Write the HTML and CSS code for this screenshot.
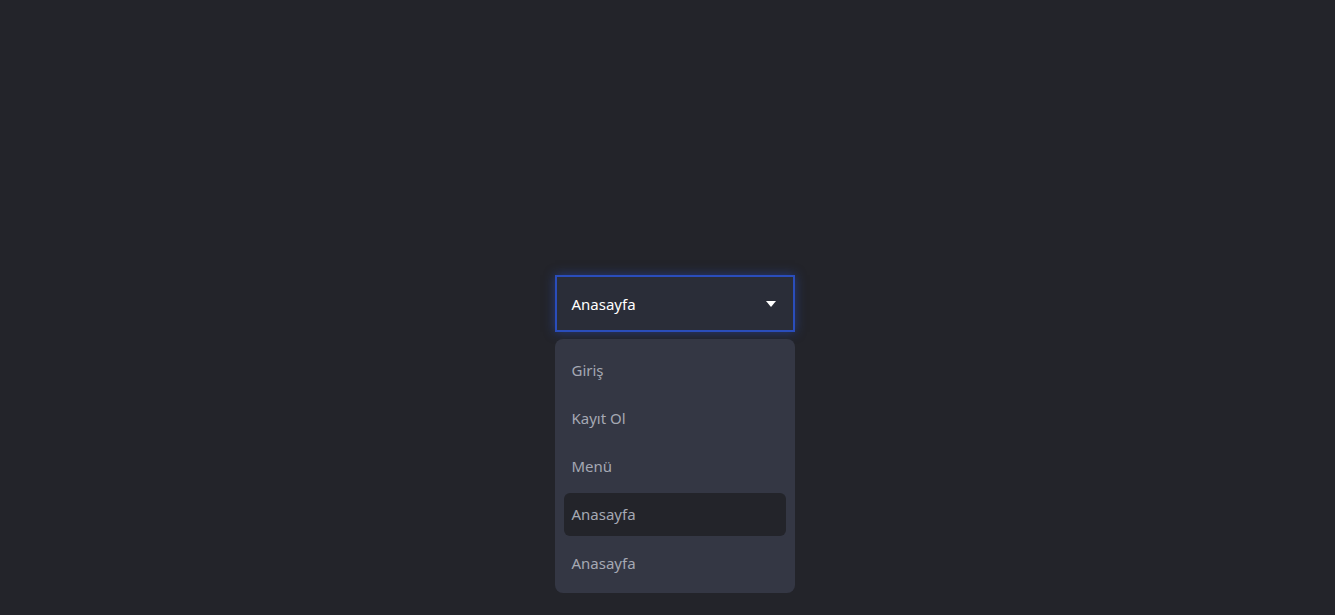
FILE: index.html
```html
<!DOCTYPE html>
<html lang="tr">
<head>
<meta charset="utf-8">
<title>Dropdown</title>
<link rel="stylesheet" href="styles.css">
</head>
<body>
<div class="page">
  <div class="dropdown">
    <div class="select">
      <span class="selected">Anasayfa</span>
      <span class="caret"></span>
    </div>
    <ul class="menu">
      <li class="item">Giriş</li>
      <li class="item">Kayıt Ol</li>
      <li class="item">Menü</li>
      <li class="item active">Anasayfa</li>
      <li class="item">Anasayfa</li>
    </ul>
  </div>
</div>
</body>
</html>
```
FILE: styles.css
```css
* { box-sizing: border-box; }
html, body { margin: 0; padding: 0; }
body {
  background: #23242a;
  font-family: "Noto Sans", "Open Sans", sans-serif;
  height: 615px;
  overflow: hidden;
}
.page {
  display: flex;
  justify-content: center;
  padding-top: 275px;
  padding-left: 14px;
}
.dropdown {
  width: 240px;
  display: flex;
  flex-direction: column;
  gap: 7px;
}
.select {
  height: 57px;
  background: #2a2d38;
  border: 2px solid #2a4dbb;
  box-shadow: 0 0 10px rgba(42, 79, 192, 0.55);
  display: flex;
  align-items: center;
  justify-content: space-between;
  padding: 1px 17px 0 15px;
  color: #ffffff;
  font-size: 15px;
}
.selected { line-height: 1; }
.caret {
  width: 0;
  height: 0;
  border-left: 5px solid transparent;
  border-right: 5px solid transparent;
  border-top: 6px solid #ffffff;
}
.menu {
  list-style: none;
  margin: 0;
  padding: 9px;
  background: #343744;
  border-radius: 8px;
  display: flex;
  flex-direction: column;
  gap: 5.3px;
}
.item {
  height: 43px;
  display: flex;
  align-items: center;
  padding-left: 8px;
  color: #a5a8b3;
  font-size: 15px;
  border-radius: 6px;
}
.item.active { background: #23242a; }
```
